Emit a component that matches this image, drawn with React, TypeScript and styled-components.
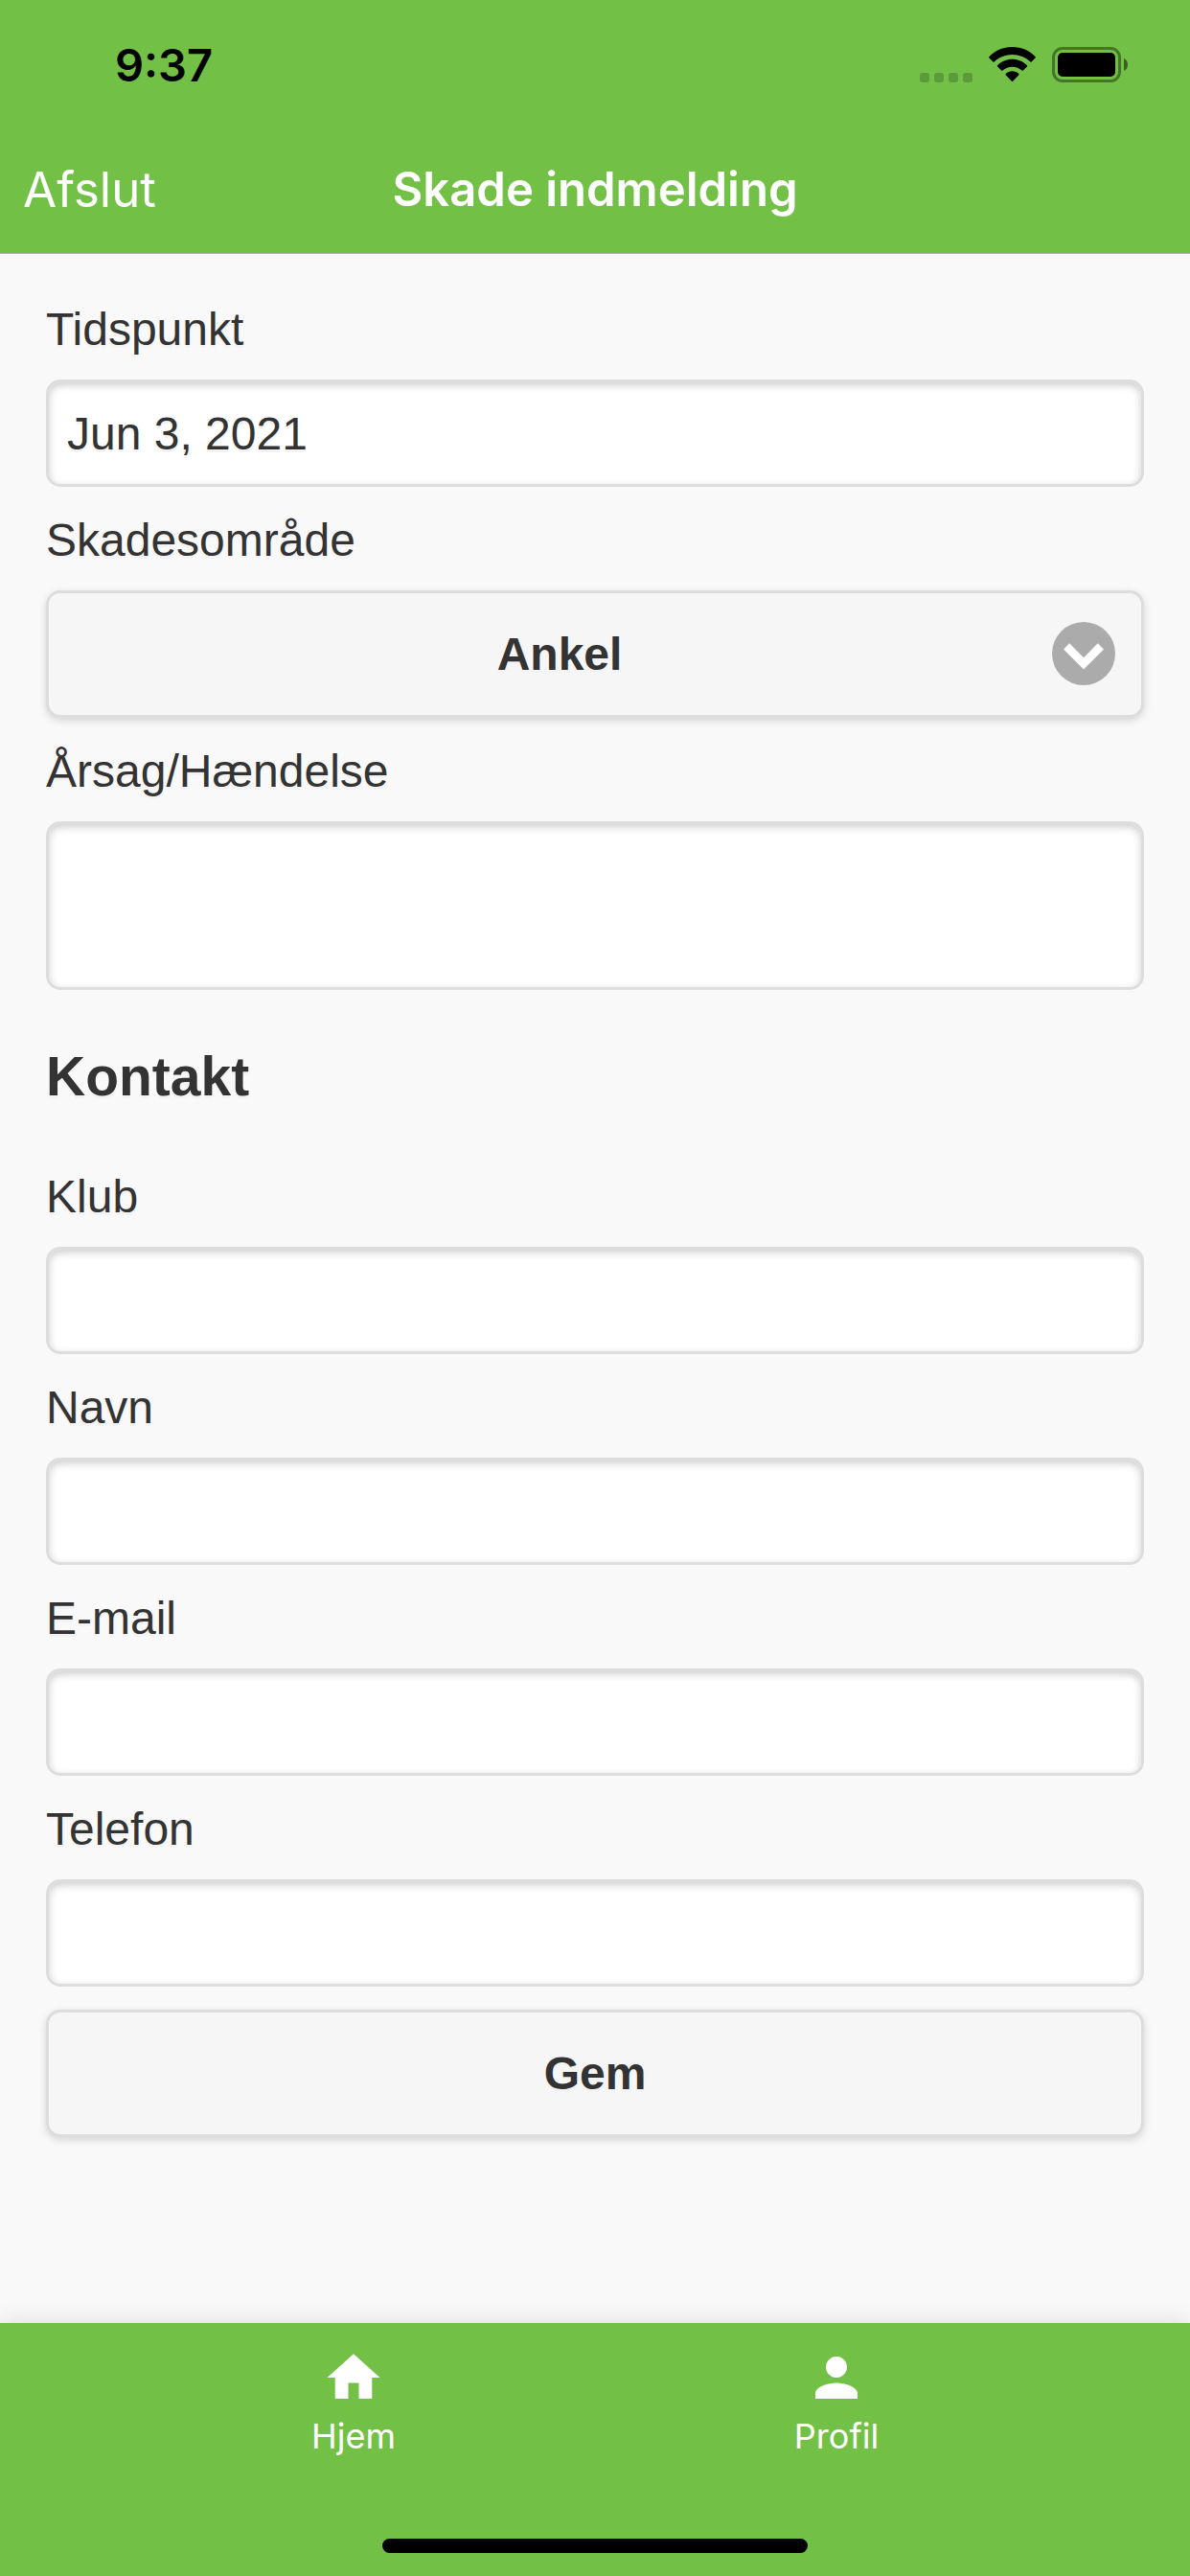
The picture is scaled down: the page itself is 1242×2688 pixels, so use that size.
import React, { useId, useState } from 'react';
import styled, { createGlobalStyle, css } from 'styled-components';

const green = '#72c146';
const systemFont = "Inter, 'Liberation Sans', sans-serif";
const formFont = "'Liberation Sans', Helvetica, Arial, sans-serif";

const GlobalStyle = createGlobalStyle`
  *, *::before, *::after { box-sizing: border-box; }
  body { margin: 0; background: #f9f9f9; }
`;

const Screen = styled.div`
  display: flex;
  flex-direction: column;
  min-height: 100vh;
  background: #f9f9f9;
  color: #333;
  font-family: ${formFont};
  font-size: 48px;
`;

const Header = styled.header`
  background: ${green};
  border-bottom: 1px solid #b2b2b2;
  font-family: ${systemFont};
`;

const StatusBar = styled.div`
  display: flex;
  align-items: center;
  justify-content: space-between;
  height: 132px;
  padding: 4px 65px 0 120px;
  color: #000;
`;

const Clock = styled.time`
  font-size: 47px;
  line-height: 64px;
  font-weight: 600;
`;

const StatusIcons = styled.div`
  display: flex;
  align-items: center;
  gap: 17px;
`;

const NavBar = styled.div`
  display: grid;
  grid-template-columns: 1fr auto 1fr;
  align-items: center;
  height: 132px;
  padding: 0 24px;
`;

const QuitButton = styled.button`
  justify-self: start;
  padding: 0;
  border: 0;
  background: none;
  color: #fff;
  font: 400 51px/64px ${systemFont};
`;

const Title = styled.h1`
  margin: 0;
  color: #fff;
  font-size: 49px;
  line-height: 64px;
  font-weight: 600;
`;

const Form = styled.form`
  display: flex;
  flex-direction: column;
  flex: 1;
  gap: 24px;
  padding: 47px 48px;
  text-shadow: 0 3px 0 #f3f3f3;
`;

const FieldBox = styled.div`
  display: flex;
  flex-direction: column;
  gap: 20px;
`;

const Label = styled.label`
  line-height: 64px;
`;

const frame = css`
  display: block;
  width: 100%;
  border: 3px solid #ddd;
  border-radius: 15px;
  color: #333;
  font-family: ${formFont};
  font-size: 48px;
  text-shadow: inherit;
`;

const inset = css`
  ${frame}
  background: #fff;
  box-shadow: inset 0 3px 9px rgba(0, 0, 0, 0.2);
`;

const raised = css`
  ${frame}
  height: 133px;
  background: #f6f6f6;
  box-shadow: 0 3px 9px rgba(0, 0, 0, 0.15);
  font-weight: 700;
`;

const TextInput = styled.input`
  ${inset}
  height: 112px;
  padding: 0 19px;
`;

const TextArea = styled.textarea`
  ${inset}
  height: 176px;
  padding: 19px;
  resize: none;
`;

const SelectBox = styled.div`
  position: relative;
`;

const Select = styled.select`
  ${raised}
  appearance: none;
  padding: 0 122px 0 48px;
  text-align: center;
  text-align-last: center;
`;

const SelectArrow = styled.svg`
  position: absolute;
  top: 33px;
  right: 30px;
  pointer-events: none;
`;

const SectionTitle = styled.h2`
  margin: 30px 0 34px;
  font-size: 57px;
  line-height: 72px;
  font-weight: 700;
`;

const SaveButton = styled.button`
  ${raised}
  padding: 0 48px;
`;

const Footer = styled.footer`
  display: flex;
  flex-direction: column;
  align-items: center;
  justify-content: space-between;
  height: 264px;
  padding: 24px 0;
  background: ${green};
  box-shadow: 0 0 24px rgba(0, 0, 0, 0.12);
`;

const Tabs = styled.nav`
  display: flex;
  justify-content: center;
  width: 100%;
`;

const Tab = styled.a`
  display: flex;
  flex: 1;
  flex-direction: column;
  align-items: center;
  gap: 6px;
  max-width: 504px;
  color: #fff;
  font: 400 36px/44px ${systemFont};
  text-decoration: none;
`;

const HomeIndicator = styled.div`
  width: 444px;
  max-width: 60%;
  height: 15px;
  border-radius: 8px;
  background: #000;
`;

function CellularIcon() {
  return (
    <svg width="55" height="38" viewBox="0 0 55 38" aria-hidden="true">
      {[0, 15, 30, 45].map((x) => (
        <rect key={x} x={x} y="27" width="10" height="10" rx="3" fillOpacity="0.2" />
      ))}
    </svg>
  );
}

function WifiIcon() {
  return (
    <svg width="49" height="38" viewBox="0 0 49 38" aria-hidden="true">
      <path d="M24.500 0C34 0 42.300 3.700 48.500 9.900Q49.200 10.700 48.500 11.500L44.600 15.500Q44 16 43.400 15.500C38.300 10.800 31.700 8 24.500 8S10.700 10.800 5.600 15.500Q5 16 4.400 15.500L.5 11.500Q-.2 10.700.5 9.900C6.700 3.700 15 0 24.500 0Z" />
      <path d="M24.500 12.700C30.500 12.700 35.800 15.100 39.900 19Q40.500 19.700 39.900 20.400L35.800 24.500Q35.200 25 34.600 24.500C31.800 22 28.300 20.700 24.500 20.700S17.200 22 14.400 24.500Q13.800 25 13.200 24.500L9.100 20.400Q8.500 19.700 9.100 19C13.200 15.100 18.500 12.700 24.500 12.700Z" />
      <path d="M24.500 25.300C27.200 25.300 29.600 26.300 31.300 28Q31.800 28.700 31.300 29.300L25.100 35.700Q24.500 36.200 23.900 35.700L17.700 29.300Q17.200 28.700 17.700 28C19.400 26.300 21.800 25.300 24.500 25.300Z" />
    </svg>
  );
}

function BatteryIcon() {
  return (
    <svg width="79" height="38" viewBox="0 0 79 38" aria-hidden="true">
      <rect x="1.500" y="1.500" width="69" height="34" rx="9.500" fill="none" stroke="#000" strokeOpacity="0.4" strokeWidth="3" />
      <rect x="6" y="6" width="60" height="25" rx="5" />
      <path d="M75 12C77.500 13 79 15.500 79 18.500S77.500 24 75 25Z" fillOpacity="0.5" />
    </svg>
  );
}

function TabIcon({ path }: { path: string }) {
  return (
    <svg width="66" height="66" viewBox="0 0 24 24" fill="#fff" aria-hidden="true">
      <path d={path} />
    </svg>
  );
}

const homePath = 'M10 20v-6h4v6h5v-8h3L12 3 2 12h3v8z';
const personPath =
  'M12 12c2.210 0 4-1.790 4-4s-1.790-4-4-4-4 1.790-4 4 1.790 4 4 4zm0 2c-2.670 0-8 1.340-8 4v2h16v-2c0-2.660-5.330-4-8-4z';

function Field({ label, type = 'text', initial = '' }: { label: string; type?: string; initial?: string }) {
  const id = useId();
  const [value, setValue] = useState(initial);
  return (
    <FieldBox>
      <Label htmlFor={id}>{label}</Label>
      <TextInput id={id} type={type} value={value} onChange={(e) => setValue(e.target.value)} />
    </FieldBox>
  );
}

export default function App() {
  return (
    <>
      <GlobalStyle />
      <Screen>
        <Header>
          <StatusBar>
            <Clock>9:37</Clock>
            <StatusIcons>
              <CellularIcon />
              <WifiIcon />
              <BatteryIcon />
            </StatusIcons>
          </StatusBar>
          <NavBar>
            <QuitButton type="button">Afslut</QuitButton>
            <Title>Skade indmelding</Title>
          </NavBar>
        </Header>

        <Form onSubmit={(e) => e.preventDefault()}>
          <Field label="Tidspunkt" initial="Jun 3, 2021" />
          <FieldBox>
            <Label htmlFor="area">Skadesområde</Label>
            <SelectBox>
              <Select id="area" defaultValue="Ankel">
                <option>Ankel</option>
              </Select>
              <SelectArrow width="66" height="66" viewBox="0 0 66 66" aria-hidden="true">
                <circle cx="33" cy="33" r="33" fill="#ababab" />
                <path d="M12 28.500L18.200 22.300 33 37.200 47.800 22.300 54 28.500 33 49.500Z" fill="#fff" />
              </SelectArrow>
            </SelectBox>
          </FieldBox>
          <FieldBox>
            <Label htmlFor="cause">Årsag/Hændelse</Label>
            <TextArea id="cause" />
          </FieldBox>
          <SectionTitle>Kontakt</SectionTitle>
          <Field label="Klub" />
          <Field label="Navn" />
          <Field label="E-mail" type="email" />
          <Field label="Telefon" type="tel" />
          <SaveButton type="submit">Gem</SaveButton>
        </Form>

        <Footer>
          <Tabs>
            <Tab href="#hjem">
              <TabIcon path={homePath} />
              Hjem
            </Tab>
            <Tab href="#profil">
              <TabIcon path={personPath} />
              Profil
            </Tab>
          </Tabs>
          <HomeIndicator />
        </Footer>
      </Screen>
    </>
  );
}
